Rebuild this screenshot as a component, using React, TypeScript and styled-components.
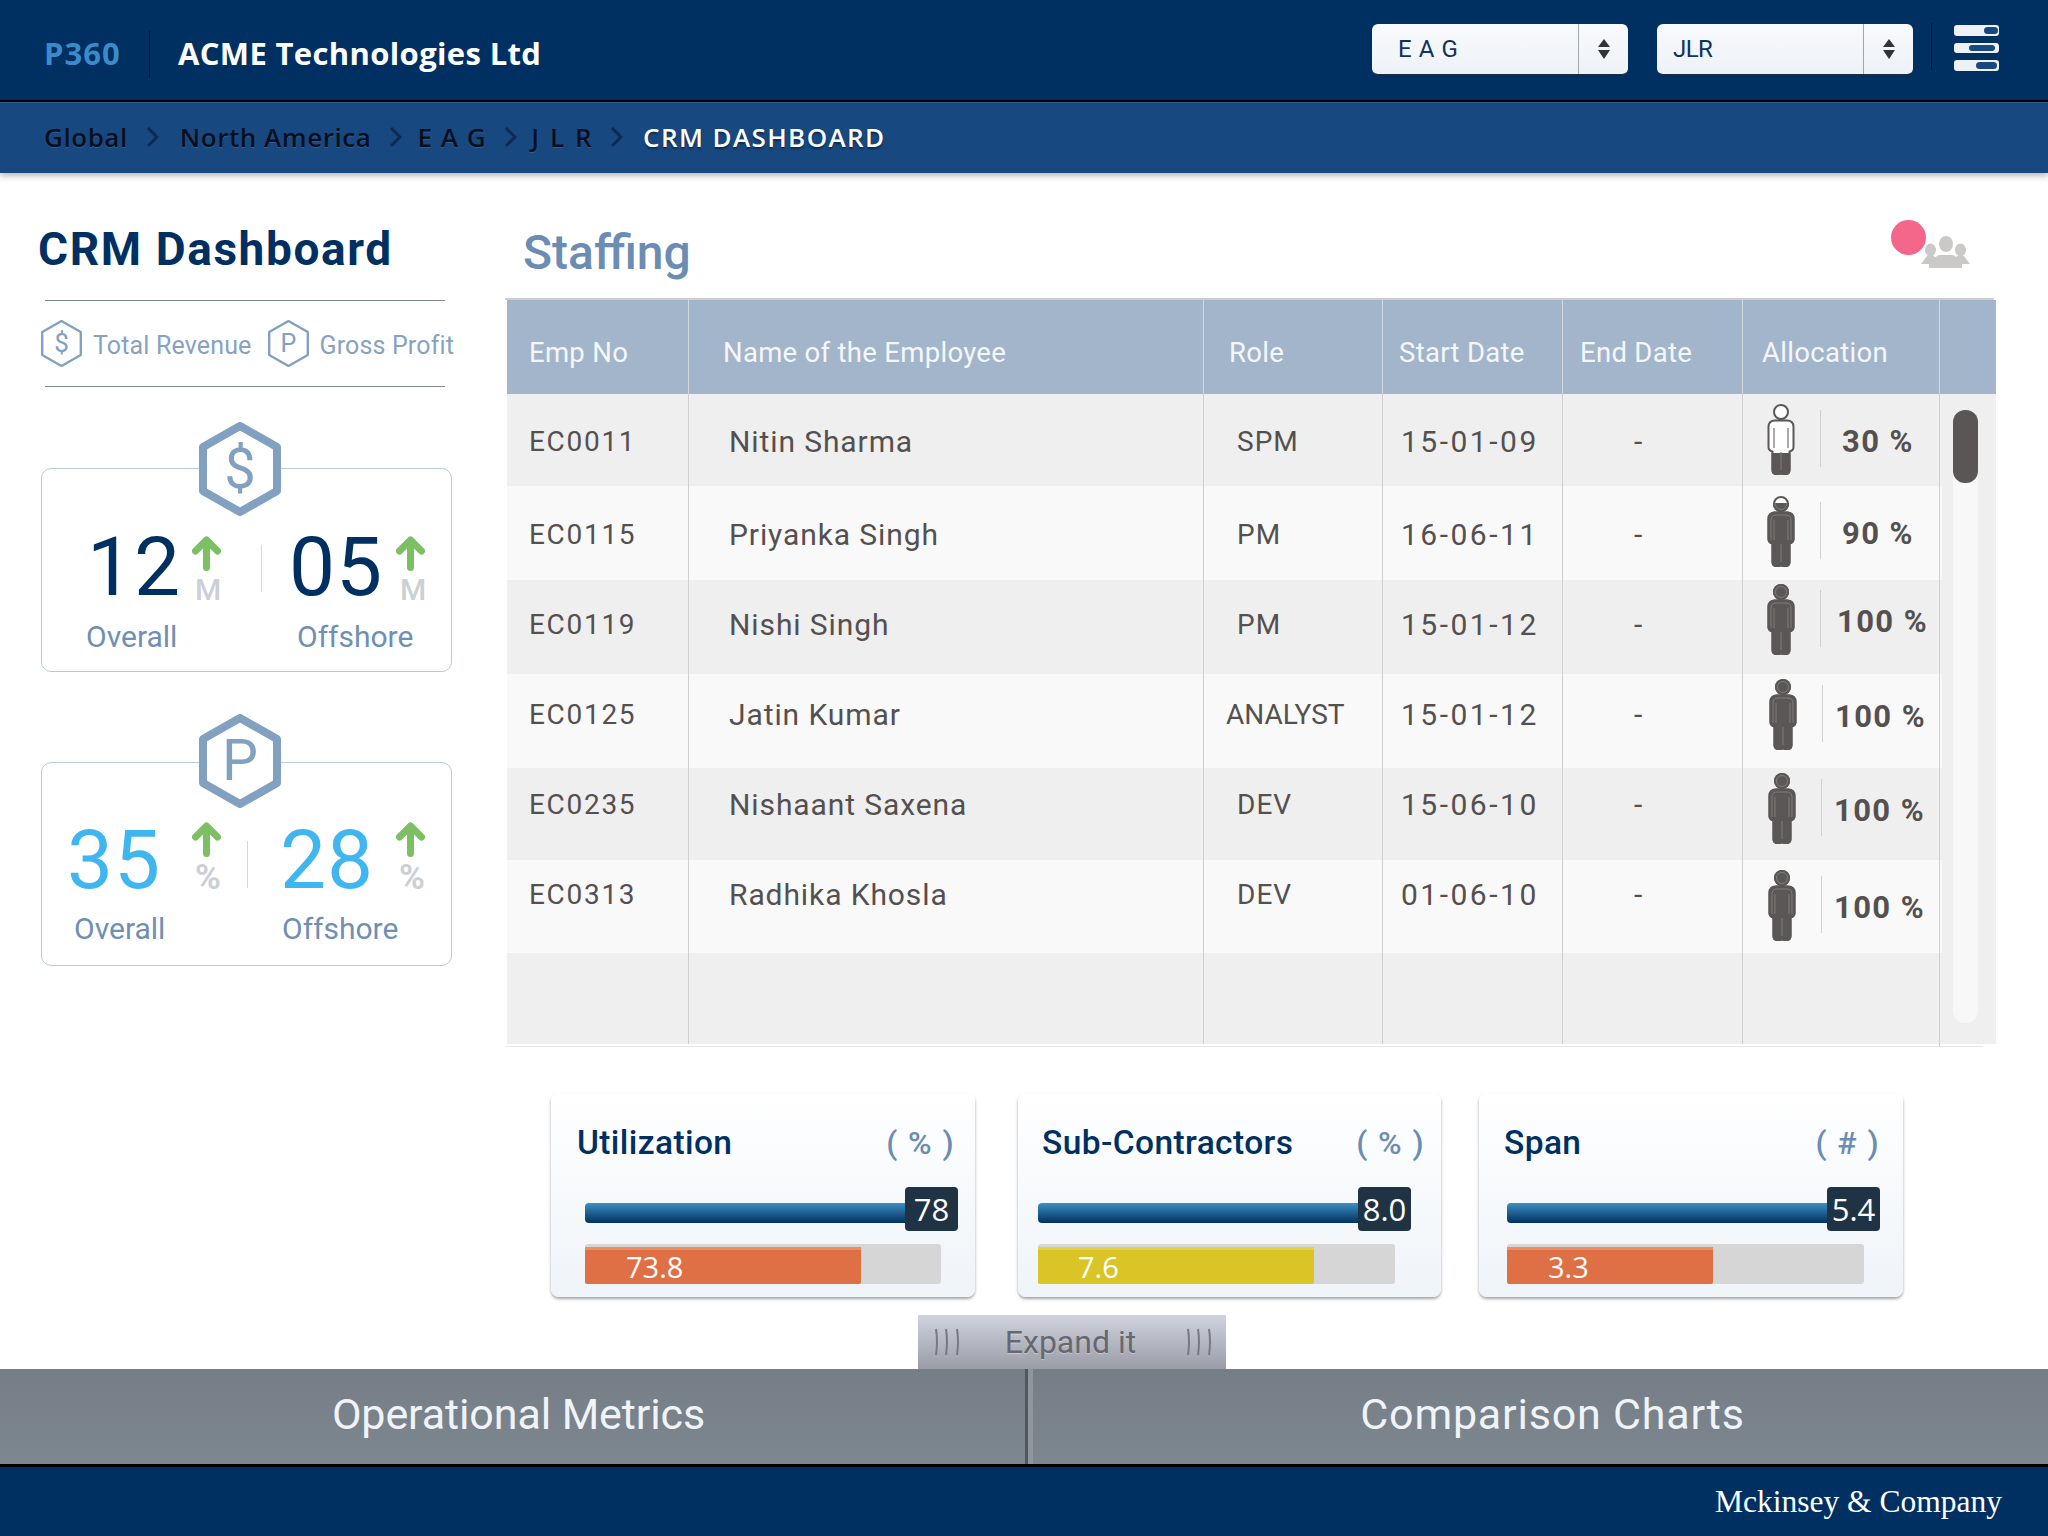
import React, { useId } from 'react';
import styled, { createGlobalStyle } from 'styled-components';

const Global = createGlobalStyle`
  html, body { margin: 0; padding: 0; background: #fff; }
  * { box-sizing: border-box; }
  body { font-family: Roboto, "Liberation Sans", sans-serif; }
`;

const Page = styled.div`
  width: 2048px; height: 1536px; display: flex; flex-direction: column; overflow: hidden; background: #fff;
`;
const Header = styled.header`
  height: 102px; flex: none; background: #003062; border-bottom: 2px solid #000;
  display: flex; align-items: flex-start;
`;
const Brand = styled.div`
  width: 150px; height: 47px; margin-top: 31px; padding-left: 44px; border-right: 1px solid #04101f;
  font: 700 31px/45px "Open Sans", sans-serif; color: #3d8ac8; flex: none; letter-spacing: 1px;
`;
const Company = styled.div`
  margin-left: 28px; margin-top: 31px; font: 700 31px/45px "Open Sans", sans-serif; color: #fff; flex: 1; letter-spacing: 0.35px;
`;
const Select = styled.div`
  width: 256px; height: 51px; margin-top: 24px; margin-left: ${p => p.$ml}px; border-radius: 6px;
  background: linear-gradient(#f8fafc, #eef2f7); border-bottom: 1px solid #1c2b40;
  display: flex; flex: none; overflow: hidden;
`;
const SelectText = styled.div`
  width: 207px; padding-left: ${p => p.$pl}px; font: 400 24px/50px Roboto, sans-serif; color: #0e3360; border-right: 1px solid #a0a6ae;
  letter-spacing: ${p => p.$ls}px;
`;
const SelectArrows = styled.div`
  flex: 1; display: flex; align-items: center; justify-content: center;
`;
const HeaderRule = styled.div`
  width: 1px; height: 47px; margin: 23px 0 0 18px; background: #04101f; flex: none;
`;
const MenuBtn = styled.div`
  width: 45px; margin: 25px 49px 0 22px; display: flex; flex-direction: column; gap: 7px; flex: none;
`;
const MenuRow = styled.div`
  height: 10.5px; border-radius: 3px; background: #eef2f7; position: relative;
`;
const MenuPill = styled.span`
  position: absolute; top: 2px; bottom: 2px; left: ${p => p.$l}px; width: ${p => p.$w}px; background: #17487f; border-radius: 4px;
`;
const Crumbs = styled.nav`
  height: 71px; flex: none; background: #17487f; border-top: 1px solid #2d5c92; padding: 0 0 2px 44px;
  display: flex; align-items: center; gap: 18px; box-shadow: 0 3px 6px rgba(0,0,0,.28); position: relative; z-index: 1;
`;
const Crumb = styled.span`
  font: 600 26px/30px "Open Sans", sans-serif; color: ${p => (p.$on ? '#fff' : '#050f20')}; letter-spacing: ${p => (p.$on ? 1.4 : 0.55)}px;
  word-spacing: ${p => p.$ws ?? 0}px; margin-left: ${p => p.$ml ?? 0}px;
  text-shadow: ${p => (p.$on ? '0 2px 2px rgba(0,0,0,.4)' : '0 1px 1px rgba(255,255,255,.12)')};
  white-space: nowrap;
`;
const Main = styled.main`
  flex: 1; display: flex; min-height: 0;
`;
const Sidebar = styled.aside`
  width: 507px; flex: none; padding-top: 48px;
`;
const SideTitle = styled.h1`
  margin: 0 0 23px 38px; font: 700 46px/56px Roboto, sans-serif; color: #003062; letter-spacing: 1.6px;
`;
const Rule = styled.div`
  width: 400px; height: 1px; margin-left: 45px; background: #7b8a9b;
`;
const Legend = styled.div`
  height: 85px; padding-left: 40px; display: flex; align-items: center;
`;
const LegendText = styled.span`
  font: 400 25px/30px Roboto, sans-serif; color: #87a2c0; margin: 4px 15px 0 10px; letter-spacing: 0.15px; white-space: nowrap;
`;
const KpiCard = styled.section`
  position: relative; width: 411px; height: 204px; margin: ${p => p.$mt}px 0 0 41px; padding-top: ${p => p.$pt}px;
  border: 1px solid #b6c9dd; border-radius: 10px; background: #fff;
`;
const KpiBadge = styled.div`
  position: absolute; left: 157px; top: ${p => p.$top}px; width: 82px; height: 94px;
`;
const StatsRow = styled.div`
  display: grid; grid-template-columns: ${p => p.$cols}; height: ${p => p.$h}px; padding-left: ${p => p.$pl}px;
`;
const StatNumber = styled.div`
  font: 400 82px/60px Roboto, sans-serif; color: ${p => p.$c}; padding-left: ${p => p.$pad ?? 0}px; margin-top: ${p => p.$top}px;
  letter-spacing: 1px; white-space: nowrap;
`;
const StatSide = styled.div`
  display: flex; flex-direction: column; align-items: flex-start;
`;
const StatUnit = styled.span`
  margin: ${p => p.$mt}px 0 0 ${p => p.$ml}px; font: ${p => p.$w} ${p => p.$s}px/28px Roboto, sans-serif; color: #cbd0d6;
`;
const StatRule = styled.div`
  width: 1px; height: 47px; margin-top: ${p => p.$top}px; background: #d4d8de;
`;
const LabelRow = styled.div`
  display: grid; grid-template-columns: ${p => p.$a}px 1fr; padding-left: ${p => p.$pl}px;
`;
const StatLabel = styled.span`
  font: 400 30px/36px Roboto, sans-serif; color: #6f8fb3;
`;
const Content = styled.div`
  width: 1489px; flex: none; display: flex; flex-direction: column;
`;
const StaffHead = styled.div`
  position: relative; height: 127px; padding-top: 52px; display: flex; justify-content: space-between;
  border-bottom: 2px solid #cfcfcf; margin-left: -2px; margin-right: 2px;
`;
const StaffTitle = styled.h2`
  margin: 0 0 0 18px; font: 500 48px/56px Roboto, sans-serif; color: #6b8db3;
`;
const TeamIcon = styled.div`
  position: relative; margin: 11px 24px 0 0; width: 49px; height: 32px;
`;
const Dot = styled.span`
  position: absolute; left: -30px; top: -16px; width: 35px; height: 35px; border-radius: 50%; background: #f5678a;
`;
const Grid = `182px 515px 179px 180px 180px 197px`;
const HeadRow = styled.div`
  height: 94px; background: #a3b5ca; display: grid; grid-template-columns: ${Grid} 56px;
`;
const HeadCell = styled.div`
  padding: 36px 0 0 ${p => p.$pl}px; font: 400 27.5px/34px Roboto, sans-serif; color: #f4f7fa;
  border-right: ${p => (p.$last ? 'none' : '1px solid #d3d9e0')}; letter-spacing: 0.3px; white-space: nowrap;
`;
const Body = styled.div`
  position: relative; height: 650px; background: #efefef;
`;
const Row = styled.div`
  width: 1435px; height: ${p => p.$h}px; display: grid; grid-template-columns: ${Grid} 2px;
  background: ${p => (p.$alt ? '#f9f9f9' : '#efefef')};
`;
const Cell = styled.div`
  padding: ${p => p.$top}px 0 0 ${p => p.$pl}px; font: 400 ${p => p.$fs ?? 28}px/34px Roboto, sans-serif; color: #555050;
  border-right: 1px solid #cfcfcf; letter-spacing: ${p => p.$ls ?? 1}px; white-space: nowrap;
`;
const AllocCell = styled.div`
  padding: ${p => p.$top}px 0 0 ${p => p.$pl}px; border-right: 1px solid #cfcfcf; display: flex; align-items: flex-start;
`;
const AllocRule = styled.span`
  width: 1px; height: 57px; margin: 6px 0 0 25px; background: #d3d0d0; flex: none;
`;
const AllocText = styled.span`
  margin: 21px 0 0 ${p => p.$ml}px; font: 700 31px/34px Roboto, sans-serif; color: #555050; white-space: nowrap; letter-spacing: 1.4px;
`;
const ScrollEdge = styled.div`
  position: absolute; left: 1432px; top: 0; bottom: -3px; width: 1px; background: #cfcfcf;
`;
const ScrollTrack = styled.div`
  position: absolute; left: 1446px; top: 16px; width: 25px; height: 613px; border-radius: 12px; background: #f8f8f8;
`;
const ScrollThumb = styled.div`
  height: 73px; border-radius: 12px; background: #5a5656;
`;
const TableEnd = styled.div`
  height: 3px; width: 1478px; border-bottom: 1px solid #e8e8e8; margin-left: -2px;
`;
const Metrics = styled.div`
  display: flex; margin: 46px 0 0 44px;
`;
const MetricCard = styled.article`
  width: ${p => p.$w}px; height: 204px; margin-left: ${p => p.$ml}px; padding: 30px ${p => p.$pr}px 0 ${p => p.$pl}px; flex: none;
  border-radius: 8px; background: linear-gradient(#fff, #eff4f9); box-shadow: 0 2px 3px rgba(90,90,90,.55);
`;
const MetricHead = styled.div`
  display: flex; justify-content: space-between; height: 40px;
`;
const MetricTitle = styled.span`
  font: 500 33.5px/40px Roboto, sans-serif; color: #003062; letter-spacing: 0.4px;
`;
const MetricUnit = styled.span`
  font: 500 32px/40px Roboto, sans-serif; color: #6b8db3; white-space: pre; letter-spacing: 1.4px;
`;
const BarRow = styled.div`
  display: flex; margin: 24px 0 0 ${p => p.$ml}px; height: 44px;
`;
const BlueBar = styled.div`
  width: ${p => p.$w}px; flex: none; height: 20px; margin-top: 16px; border-radius: 4px 0 0 4px; background: linear-gradient(#3d8fc4, #00315f);
`;
const Badge = styled.span`
  width: 53px; flex: none; height: 44px; border-radius: 4px; background: #1f3344; color: #fff; text-align: center;
  font: 500 31px/44px "Open Sans", sans-serif;
`;
const Track = styled.div`
  width: ${p => p.$w}px; height: 40px; margin: 13px 0 0 ${p => p.$ml}px; padding-top: 3px; background: #d6d6d6; border-radius: 3px;
`;
const Fill = styled.div`
  height: 37px; padding-left: ${p => p.$pl}px; background: ${p => p.$c}; border-top: 3px solid ${p => p.$hi}; border-radius: 0 0 2px 2px;
  font: 500 29px/34px "Open Sans", sans-serif; color: #fff;
`;
const ExpandWrap = styled.div`
  height: 54px; flex: none; padding-left: 918px;
`;
const Expand = styled.div`
  width: 308px; height: 54px; background: linear-gradient(#d0d2de, #9a9ca6); display: flex; align-items: center; justify-content: space-between;
  padding: 0 13px 0 15px; font: 400 32px/40px Roboto, sans-serif; color: #666870; text-shadow: 0 1px 1px rgba(255,255,255,.35);
`;
const ExpandLabel = styled.span`
  margin-right: 5px;
`;
const Tabs = styled.div`
  height: 95px; flex: none; display: flex; background: linear-gradient(#757e87, #7d878f);
`;
const Tab = styled.div`
  width: ${p => p.$w}px; padding-left: ${p => p.$pl}px; text-align: center; font: 400 43px/90px Roboto, sans-serif; color: #f0f3f7; letter-spacing: ${p => p.$ls}px;
`;
const TabRule = styled.div`
  width: 8px; flex: none; background: linear-gradient(90deg, #50585f 0 3px, #8e979e 3px);
`;
const Footer = styled.footer`
  height: 72px; flex: none; background: #003062; border-top: 3px solid #000; padding-right: 46px; text-align: right;
  font: 400 31.5px/69px "Liberation Serif", serif; color: #fff;
`;

const Hex: React.FC<{ w: number; h: number; sw: number; fs: number; ch: string; dy: number }> = ({ w, h, sw, fs, ch, dy }) => (
  <svg width={w} height={h} viewBox="0 0 82 94" style={{ flex: 'none', display: 'block' }}>
    <polygon points="41,4 78,25 78,69 41,90 4,69 4,25" fill="#fff" stroke="#82a0bf" strokeWidth={sw} strokeLinejoin="round" />
    <text x="41" y={dy} textAnchor="middle" fontFamily="Roboto, sans-serif" fontSize={fs} fill="#82a0bf">{ch}</text>
  </svg>
);
const UpArrow = () => (
  <svg width="29" height="35" viewBox="0 0 29 35" style={{ display: 'block', flex: 'none' }}>
    <path d="M14.5 31.5V5M3.5 15L14.5 4L25.5 15" fill="none" stroke="#7dbf63" strokeWidth="7" strokeLinecap="round" strokeLinejoin="round" />
  </svg>
);
const Chevron = () => (
  <svg width="13" height="20" viewBox="0 0 13 20" style={{ flex: 'none' }}>
    <path d="M2 1L11 10L2 19" fill="none" stroke="#0e2a52" strokeWidth="3" />
  </svg>
);
const UpDown = () => (
  <svg width="14" height="20" viewBox="0 0 14 20">
    <path d="M7 0L13 8H1ZM7 20L13 11H1Z" fill="#303338" />
  </svg>
);
const Grip = () => (
  <svg width="28" height="30" viewBox="0 0 28 30">
    <path d="M3 2Q5 15 3 28M13 2Q15 15 13 28M24 2Q26 15 24 28" fill="none" stroke="#777983" strokeWidth="2" />
  </svg>
);
const Team = () => (
  <svg width="49" height="32" viewBox="0 0 49 32" style={{ display: 'block' }}>
    <g fill="#cbc8c8">
      <ellipse cx="9.5" cy="14" rx="5.5" ry="6.5" />
      <ellipse cx="39.5" cy="14" rx="5.5" ry="6.5" />
      <path d="M0 28L6 20H13L17 26V32H32V26L36 20H43L49 28H41V32H8V28Z" />
      <ellipse cx="25" cy="8" rx="7" ry="8" />
      <path d="M9 32V24L18 19H32L41 24V32Z" />
    </g>
  </svg>
);
const BODY = 'M8 16.5H20Q26.5 16.5 26.5 23V43Q26.5 46.5 22.5 47.5V66Q22.5 70 18.5 70H16.5Q14 70 14 67.5Q14 70 11.5 70H9.5Q5.5 70 5.5 66V47.5Q1.5 46.5 1.5 43V23Q1.5 16.5 8 16.5Z';
const INNER = 'M7 24V44M21 24V44M14 48V66';
const Person: React.FC<{ pct: number }> = ({ pct }) => {
  const id = useId();
  const y = (1 - pct / 100) * 70;
  return (
    <svg width="28" height="71" viewBox="0 0 28 71" style={{ display: 'block', flex: 'none' }}>
      <clipPath id={id}><rect x="0" y={y} width="28" height="71" /></clipPath>
      <circle cx="14" cy="8" r="7" fill="#fff" stroke="#5b5757" strokeWidth="2" />
      <path d={BODY} fill="#fff" stroke="#5b5757" strokeWidth="2" />
      <path d={INNER} fill="none" stroke="#5b5757" strokeWidth="1" />
      <g clipPath={`url(#${id})`}>
        <circle cx="14" cy="8" r="8" fill="#5b5757" />
        <circle cx="14" cy="8" r="5.5" fill="none" stroke="#8a8686" strokeWidth="0.8" />
        <path d={BODY} fill="#5b5757" stroke="#5b5757" strokeWidth="2" />
        <path d="M4 44V24Q4 19 9 19H19Q24 19 24 24V44M7 24V44M21 24V44M14 48V66" fill="none" stroke="#8a8686" strokeWidth="0.8" />
      </g>
    </svg>
  );
};

const heads = [
  ['Emp No', 22], ['Name of the Employee', 34], ['Role', 25], ['Start Date', 16], ['End Date', 17], ['Allocation', 19],
] as const;

const rows = [
  { no: 'EC0011', name: 'Nitin Sharma', role: 'SPM', rp: 33, rl: 1, start: '15-01-09', h: 92, t: 31, pct: 30, val: '30 %', pt: 10, pl: 24, tm: 21 },
  { no: 'EC0115', name: 'Priyanka Singh', role: 'PM', rp: 33, rl: 1, start: '16-06-11', h: 94, t: 32, pct: 90, val: '90 %', pt: 10, pl: 24, tm: 21 },
  { no: 'EC0119', name: 'Nishi Singh', role: 'PM', rp: 33, rl: 1, start: '15-01-12', h: 94, t: 28, pct: 100, val: '100 %', pt: 4, pl: 24, tm: 16 },
  { no: 'EC0125', name: 'Jatin Kumar', role: 'ANALYST', rp: 22, rl: 0, start: '15-01-12', h: 94, t: 24, pct: 100, val: '100 %', pt: 5, pl: 26, tm: 12 },
  { no: 'EC0235', name: 'Nishaant Saxena', role: 'DEV', rp: 33, rl: 1, start: '15-06-10', h: 92, t: 20, pct: 100, val: '100 %', pt: 5, pl: 25, tm: 12 },
  { no: 'EC0313', name: 'Radhika Khosla', role: 'DEV', rp: 33, rl: 1, start: '01-06-10', h: 93, t: 18, pct: 100, val: '100 %', pt: 10, pl: 25, tm: 12 },
];

const metrics = [
  { title: 'Utilization', unit: '( % )', w: 424, ml: 0, pl: 26, pr: 20, bar: 8, bw: 320, tw: 356, val: '78', fill: 276, fillC: '#df7045', hi: '#e98d66', fv: '73.8', fp: 41 },
  { title: 'Sub-Contractors', unit: '( % )', w: 423, ml: 43, pl: 24, pr: 16, bar: -4, bw: 320, tw: 357, val: '8.0', fill: 276, fillC: '#dbc425', hi: '#e3d04a', fv: '7.6', fp: 40 },
  { title: 'Span', unit: '( # )', w: 424, ml: 38, pl: 25, pr: 23, bar: 3, bw: 320, tw: 357, val: '5.4', fill: 206, fillC: '#df7045', hi: '#e98d66', fv: '3.3', fp: 41 },
];

export default function App() {
  return (
    <Page>
      <Global />
      <Header>
        <Brand>P360</Brand>
        <Company>ACME Technologies Ltd</Company>
        <Select $ml={0}>
          <SelectText $pl={26} $ls={0.6}>E A G</SelectText>
          <SelectArrows><UpDown /></SelectArrows>
        </Select>
        <Select $ml={29}>
          <SelectText $pl={16} $ls={-0.6}>JLR</SelectText>
          <SelectArrows><UpDown /></SelectArrows>
        </Select>
        <HeaderRule />
        <MenuBtn>
          <MenuRow><MenuPill $l={30} $w={14} /></MenuRow>
          <MenuRow><MenuPill $l={15} $w={26} /></MenuRow>
          <MenuRow><MenuPill $l={22} $w={21} /></MenuRow>
        </MenuBtn>
      </Header>
      <Crumbs>
        <Crumb>Global</Crumb><Chevron />
        <Crumb $ml={3}>North America</Crumb><Chevron />
        <Crumb $ml={-3} $ws={1}>E A G</Crumb><Chevron />
        <Crumb $ml={-4} $ws={3}>J L R</Crumb><Chevron />
        <Crumb $on $ml={2}>CRM DASHBOARD</Crumb>
      </Crumbs>
      <Main>
        <Sidebar>
          <SideTitle>CRM Dashboard</SideTitle>
          <Rule />
          <Legend>
            <Hex w={43} h={49} sw={4.5} fs={50} ch="$" dy={64} />
            <LegendText>Total Revenue</LegendText>
            <Hex w={43} h={49} sw={4.5} fs={48} ch="P" dy={64} />
            <LegendText>Gross Profit</LegendText>
          </Legend>
          <Rule />
          <KpiCard $mt={81} $pt={67}>
            <KpiBadge $top={-47}><Hex w={82} h={94} sw={8} fs={56} ch="$" dy={66} /></KpiBadge>
            <StatsRow $pl={45} $h={83} $cols="105px 69px 1px 134px 1fr">
              <StatNumber $c="#003062" $top={1}>12</StatNumber>
              <StatSide><UpArrow /><StatUnit $mt={5} $ml={3} $w={500} $s={30}>M</StatUnit></StatSide>
              <StatRule $top={9} />
              <StatNumber $c="#003062" $top={1} $pad={27}>05</StatNumber>
              <StatSide><UpArrow /><StatUnit $mt={5} $ml={4} $w={500} $s={30}>M</StatUnit></StatSide>
            </StatsRow>
            <LabelRow $pl={44} $a={211}>
              <StatLabel>Overall</StatLabel><StatLabel>Offshore</StatLabel>
            </LabelRow>
          </KpiCard>
          <KpiCard $mt={90} $pt={59}>
            <KpiBadge $top={-49}><Hex w={82} h={94} sw={8} fs={57} ch="P" dy={66} /></KpiBadge>
            <StatsRow $pl={25} $h={89} $cols="125px 55px 1px 148px 1fr">
              <StatNumber $c="#3fb6ef" $top={8}>35</StatNumber>
              <StatSide><UpArrow /><StatUnit $mt={7} $ml={3} $w={700} $s={35}>%</StatUnit></StatSide>
              <StatRule $top={19} />
              <StatNumber $c="#3fb6ef" $top={8} $pad={32}>28</StatNumber>
              <StatSide><UpArrow /><StatUnit $mt={7} $ml={3} $w={700} $s={35}>%</StatUnit></StatSide>
            </StatsRow>
            <LabelRow $pl={32} $a={208}>
              <StatLabel>Overall</StatLabel><StatLabel>Offshore</StatLabel>
            </LabelRow>
          </KpiCard>
        </Sidebar>
        <Content>
          <StaffHead>
            <StaffTitle>Staffing</StaffTitle>
            <TeamIcon><Team /><Dot /></TeamIcon>
          </StaffHead>
          <HeadRow>
            {heads.map(([h, pl]) => <HeadCell key={h} $pl={pl}>{h}</HeadCell>)}
            <HeadCell $pl={0} $last />
          </HeadRow>
          <Body>
            {rows.map((r, i) => (
              <Row key={r.no} $h={r.h} $alt={i % 2 === 1}>
                <Cell $top={r.t} $pl={22} $ls={1.7}>{r.no}</Cell>
                <Cell $top={r.t} $pl={40} $fs={30} $ls={0.9}>{r.name}</Cell>
                <Cell $top={r.t} $pl={r.rp} $ls={r.rl}>{r.role}</Cell>
                <Cell $top={r.t} $pl={18} $fs={30} $ls={2.5}>{r.start}</Cell>
                <Cell $top={r.t} $pl={71} $fs={30}>-</Cell>
                <AllocCell $top={r.pt} $pl={r.pl}>
                  <Person pct={r.pct} />
                  <AllocRule />
                  <AllocText $ml={r.tm}>{r.val}</AllocText>
                </AllocCell>
              </Row>
            ))}
            <Row $h={91}>
              <Cell $top={0} $pl={0} /><Cell $top={0} $pl={0} /><Cell $top={0} $pl={0} />
              <Cell $top={0} $pl={0} /><Cell $top={0} $pl={0} /><Cell $top={0} $pl={0} />
            </Row>
            <ScrollEdge />
            <ScrollTrack><ScrollThumb /></ScrollTrack>
          </Body>
          <TableEnd />
          <Metrics>
            {metrics.map(m => (
              <MetricCard key={m.title} $w={m.w} $ml={m.ml} $pl={m.pl} $pr={m.pr}>
                <MetricHead>
                  <MetricTitle>{m.title}</MetricTitle>
                  <MetricUnit>{m.unit}</MetricUnit>
                </MetricHead>
                <BarRow $ml={m.bar}>
                  <BlueBar $w={m.bw} />
                  <Badge>{m.val}</Badge>
                </BarRow>
                <Track $w={m.tw} $ml={m.bar}>
                  <Fill style={{ width: m.fill }} $pl={m.fp} $c={m.fillC} $hi={m.hi}>{m.fv}</Fill>
                </Track>
              </MetricCard>
            ))}
          </Metrics>
        </Content>
      </Main>
      <ExpandWrap>
        <Expand><Grip /><ExpandLabel>Expand it</ExpandLabel><Grip /></Expand>
      </ExpandWrap>
      <Tabs>
        <Tab $w={1025} $pl={12} $ls={-0.1}>Operational Metrics</Tab>
        <TabRule />
        <Tab $w={1015} $pl={24} $ls={0.8}>Comparison Charts</Tab>
      </Tabs>
      <Footer>Mckinsey &amp; Company</Footer>
    </Page>
  );
}
